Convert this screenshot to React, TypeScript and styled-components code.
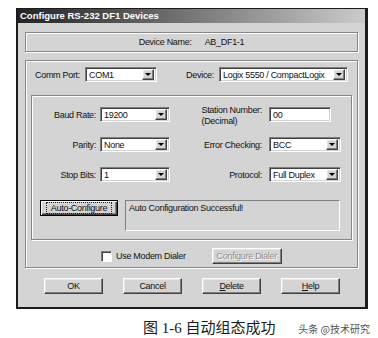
import React from 'react';
import styled, { createGlobalStyle, css } from 'styled-components';

const GlobalStyle = createGlobalStyle`
  body {
    margin: 0;
    background: #fff;
    font-family: "Liberation Sans", Arial, sans-serif;
  }
`;

const etched = css`
  box-sizing: border-box;
  border: 1px solid #868686;
  box-shadow: inset 1px 1px 0 #fff, 1px 1px 0 #fff;
`;

const raised = css`
  box-sizing: border-box;
  background: #d4d4d4;
  border: 1px solid;
  border-color: #fff #404040 #404040 #fff;
  box-shadow: inset -1px -1px 0 #808080, inset 1px 1px 0 #e4e4e4;
`;

const Page = styled.div`
  width: 378px;
  height: 338px;
  box-sizing: border-box;
  padding: 8px 0 0 16px;
  overflow: hidden;
`;

const Window = styled.div`
  width: 352px;
  height: 301px;
  box-sizing: border-box;
  border: 2px solid #1c1c1c;
  border-top-width: 1px;
  border-right-width: 3px;
  background: #d4d4d4;
  display: flex;
  flex-direction: column;
  font-size: 9px;
  letter-spacing: -0.3px;
  color: #111;
`;

const TitleBar = styled.div`
  height: 14px;
  background: linear-gradient(to right, #232323, #cbcbcb);
  color: #fff;
  font-weight: bold;
  font-size: 9.5px;
  letter-spacing: 0;
  line-height: 14px;
  padding-left: 2px;
  white-space: nowrap;
`;

const Body = styled.div`
  padding: 9px 7px 0 7px;
  display: flex;
  flex-direction: column;
`;

const NamePanel = styled.div`
  ${etched};
  height: 20px;
  display: flex;
  align-items: center;
  justify-content: center;
  gap: 13px;
`;

const OuterGroup = styled.div`
  ${etched};
  margin-top: 8px;
  height: 208px;
  padding: 6px 5px 0 5px;
  display: flex;
  flex-direction: column;
`;

const CommRow = styled.div`
  height: 15px;
  padding-left: 4px;
  display: grid;
  grid-template-columns: 50px 72px 62px 129px;
  align-items: center;
`;

const Label = styled.span<{ $right?: boolean; $pad?: number }>`
  white-space: nowrap;
  text-align: ${p => (p.$right ? 'right' : 'left')};
  padding-right: ${p => p.$pad ?? 0}px;
`;

const InnerGroup = styled.div`
  ${etched};
  margin-top: 13px;
  height: 145px;
  padding-top: 11px;
  display: flex;
  flex-direction: column;
`;

const FieldGrid = styled.div`
  display: grid;
  grid-template-columns: 64px 70px 91px 72px;
  grid-template-rows: 15px 15px 15px;
  column-gap: 4px;
  row-gap: 15px;
  align-items: center;
`;

const TwoLineLabel = styled.span`
  justify-self: end;
  align-self: start;
  margin-top: -2px;
  line-height: 11px;
  padding-right: 3px;
  white-space: nowrap;
`;

const Field = styled.div<{ $w: number }>`
  width: ${p => p.$w}px;
  height: 15px;
  box-sizing: border-box;
  background: #fff;
  border: 1px solid;
  border-color: #808080 #fff #fff #808080;
  box-shadow: inset 1px 1px 0 #404040, inset -1px -1px 0 #d4d4d4;
  display: flex;
  align-items: center;
  padding: 1px 2px 1px 3px;
  white-space: nowrap;
  overflow: hidden;
`;

const DropButton = styled.div`
  ${raised};
  margin-left: auto;
  flex: none;
  width: 12px;
  height: 11px;
  display: flex;
  align-items: center;
  justify-content: center;
  &::after {
    content: '';
    border-left: 3px solid transparent;
    border-right: 3px solid transparent;
    border-top: 3px solid #000;
  }
`;

const AutoRow = styled.div`
  margin-top: 18px;
  padding-left: 8px;
  display: flex;
  align-items: flex-start;
  gap: 7px;
`;

const Button = styled.button<{ $w: number; $h?: number; $disabled?: boolean }>`
  ${raised};
  width: ${p => p.$w}px;
  height: ${p => p.$h ?? 16}px;
  padding: 0;
  font-family: inherit;
  font-size: 9px;
  letter-spacing: -0.3px;
  color: ${p => (p.$disabled ? '#8e8e8e' : '#111')};
  text-shadow: ${p => (p.$disabled ? '1px 1px 0 #fff' : 'none')};
  flex: none;
`;

const DefaultButton = styled(Button)`
  border: 1px solid #000;
  box-shadow: inset 1px 1px 0 #fff, inset -1px -1px 0 #404040, inset -2px -2px 0 #808080;
  display: flex;
  align-items: center;
  justify-content: center;
  span {
    border: 1px dotted #222;
    padding: 0 4px;
    line-height: 10px;
  }
`;

const StatusBox = styled.div`
  width: 215px;
  height: 31px;
  box-sizing: border-box;
  border: 1px solid;
  border-color: #808080 #fff #fff #808080;
  padding: 2px 3px;
  white-space: nowrap;
`;

const ModemRow = styled.div`
  margin-top: 8px;
  height: 16px;
  padding-left: 70px;
  display: flex;
  align-items: center;
`;

const CheckBox = styled.div`
  width: 11px;
  height: 11px;
  box-sizing: border-box;
  background: #fff;
  border: 1px solid;
  border-color: #808080 #fff #fff #808080;
  box-shadow: inset 1px 1px 0 #404040;
  margin-right: 4px;
`;

const DialerButton = styled(Button)`
  margin-left: 26px;
`;

const ButtonRow = styled.div`
  margin-top: 10px;
  padding-left: 19px;
  display: flex;
  gap: 20px;
`;

const Footer = styled.div`
  margin-top: 7px;
  padding-left: 127px;
  display: flex;
  align-items: baseline;
`;

const Caption = styled.span`
  font-family: "Liberation Serif", "Noto Sans CJK SC", serif;
  font-size: 15px;
  color: #1a1a1a;
  white-space: nowrap;
`;

const Watermark = styled.span`
  margin-left: auto;
  margin-right: 8px;
  font-family: "Noto Sans CJK SC", sans-serif;
  font-size: 10px;
  color: #555;
  white-space: nowrap;
`;

const Select: React.FC<{ w: number; value: string }> = ({ w, value }) => (
  <Field $w={w}>
    <span>{value}</span>
    <DropButton />
  </Field>
);

export default function App() {
  return (
    <Page>
      <GlobalStyle />
      <Window>
        <TitleBar>Configure RS-232 DF1 Devices</TitleBar>
        <Body>
          <NamePanel>
            <span>Device Name:</span>
            <span>AB_DF1-1</span>
          </NamePanel>
          <OuterGroup>
            <CommRow>
              <Label>Comm Port:</Label>
              <Select w={72} value="COM1" />
              <Label $right $pad={5}>Device:</Label>
              <Select w={129} value="Logix 5550 / CompactLogix" />
            </CommRow>
            <InnerGroup>
              <FieldGrid>
                <Label $right>Baud Rate:</Label>
                <Select w={70} value="19200" />
                <TwoLineLabel>
                  Station Number:
                  <br />
                  (Decimal)
                </TwoLineLabel>
                <Field $w={62}>00</Field>

                <Label $right>Parity:</Label>
                <Select w={70} value="None" />
                <Label $right $pad={3}>Error Checking:</Label>
                <Select w={72} value="BCC" />

                <Label $right>Stop Bits:</Label>
                <Select w={70} value="1" />
                <Label $right $pad={3}>Protocol:</Label>
                <Select w={72} value="Full Duplex" />
              </FieldGrid>
              <AutoRow>
                <DefaultButton $w={78}>
                  <span>Auto-Configure</span>
                </DefaultButton>
                <StatusBox>Auto Configuration Successful!</StatusBox>
              </AutoRow>
            </InnerGroup>
            <ModemRow>
              <CheckBox />
              <span>Use Modem Dialer</span>
              <DialerButton $w={70} $disabled>
                Configure Dialer
              </DialerButton>
            </ModemRow>
          </OuterGroup>
          <ButtonRow>
            <Button $w={59}>OK</Button>
            <Button $w={59}>Cancel</Button>
            <Button $w={59}>
              <u>D</u>elete
            </Button>
            <Button $w={59}>
              <u>H</u>elp
            </Button>
          </ButtonRow>
        </Body>
      </Window>
      <Footer>
        <Caption>图 1-6 自动组态成功</Caption>
        <Watermark>头条 @技术研究</Watermark>
      </Footer>
    </Page>
  );
}
